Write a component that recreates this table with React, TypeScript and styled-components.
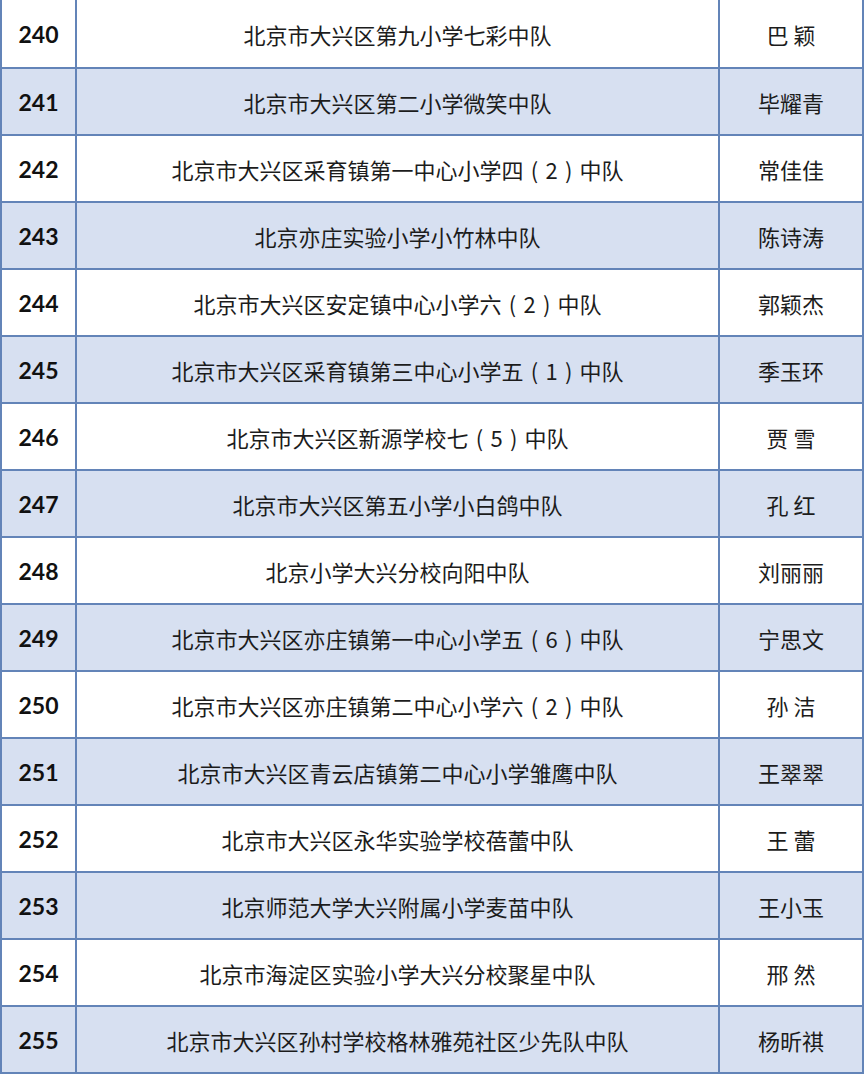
import React from 'react'
import styled, { createGlobalStyle } from 'styled-components'

const rows: [string, string, string][] = [
  ['240', '北京市大兴区第九小学七彩中队', '巴 颖'],
  ['241', '北京市大兴区第二小学微笑中队', '毕耀青'],
  ['242', '北京市大兴区采育镇第一中心小学四（2）中队', '常佳佳'],
  ['243', '北京亦庄实验小学小竹林中队', '陈诗涛'],
  ['244', '北京市大兴区安定镇中心小学六（2）中队', '郭颖杰'],
  ['245', '北京市大兴区采育镇第三中心小学五（1）中队', '季玉环'],
  ['246', '北京市大兴区新源学校七（5）中队', '贾 雪'],
  ['247', '北京市大兴区第五小学小白鸽中队', '孔 红'],
  ['248', '北京小学大兴分校向阳中队', '刘丽丽'],
  ['249', '北京市大兴区亦庄镇第一中心小学五（6）中队', '宁思文'],
  ['250', '北京市大兴区亦庄镇第二中心小学六（2）中队', '孙 洁'],
  ['251', '北京市大兴区青云店镇第二中心小学雏鹰中队', '王翠翠'],
  ['252', '北京市大兴区永华实验学校蓓蕾中队', '王 蕾'],
  ['253', '北京师范大学大兴附属小学麦苗中队', '王小玉'],
  ['254', '北京市海淀区实验小学大兴分校聚星中队', '邢 然'],
  ['255', '北京市大兴区孙村学校格林雅苑社区少先队中队', '杨昕祺'],
]

// full-width brackets drawn centred in their em box
const TeamName = ({ text }: { text: string }) => (
  <>
    {text.split(/([（）])/).map((part, i) =>
      part === '（' ? <Paren key={i}>(</Paren> : part === '）' ? <Paren key={i}>)</Paren> : part
    )}
  </>
)

const App = () => {
  return (
    <>
      <Global />
      <Table>
        {rows.map(([no, team, name], i) => (
          <Row key={no} $first={i === 0}>
            <NumCell $shade={i % 2 === 1}>{no}</NumCell>
            <Cell $shade={i % 2 === 1}><TeamName text={team} /></Cell>
            <Cell $shade={i % 2 === 1}>{name}</Cell>
          </Row>
        ))}
      </Table>
    </>
  )
}

export default App

const Global = createGlobalStyle`
    body {
        margin: 0;
        background: #ffffff;
    }
`
const Table = styled.div`
    width: 864px;
    display: flex;
    flex-direction: column;
    gap: 2px;
    padding: 0 2px 2px;
    box-sizing: border-box;
    background-color: #6384b8;
`
const Row = styled.div<{ $first?: boolean }>`
    display: grid;
    grid-template-columns: 73px 1fr 142px;
    gap: 2px;
    height: ${(p) => (p.$first ? '67px' : '65px')};
`
const Cell = styled.div<{ $shade?: boolean }>`
    display: flex;
    justify-content: center;
    align-items: center;
    background-color: ${(p) => (p.$shade ? '#d7e0f1' : '#ffffff')};
    font-family: "Noto Sans CJK SC", "Noto Sans", sans-serif;
    font-size: 22px;
    color: #1c1c1c;
    white-space: pre;
`
const Paren = styled.span`
    display: inline-block;
    width: 1em;
    text-align: center;
`
const NumCell = styled(Cell)`
    font-family: Lato, "Liberation Sans", sans-serif;
    font-weight: 700;
    font-size: 23px;
    color: #111111;
`
